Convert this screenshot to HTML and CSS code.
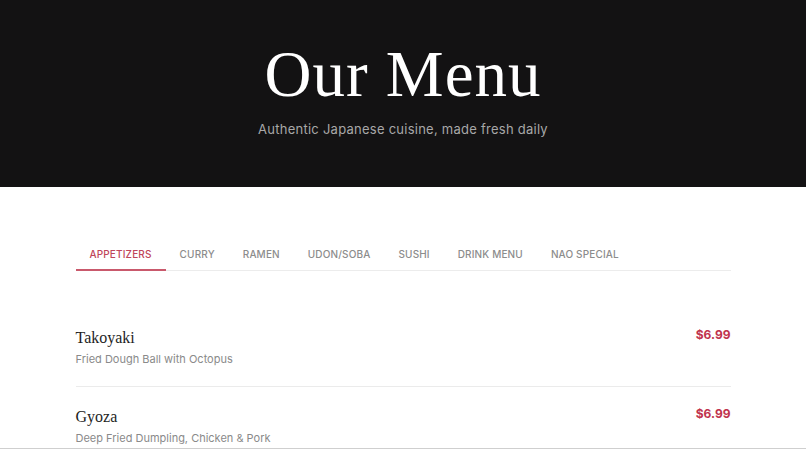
FILE: index.html
```html
<!DOCTYPE html>
<html lang="en">
<head>
<meta charset="utf-8">
<title>Our Menu</title>
<link rel="stylesheet" href="styles.css">
</head>
<body>
<header class="hero">
  <h1 class="hero-title">Our Menu</h1>
  <p class="hero-sub">Authentic Japanese cuisine, made fresh daily</p>
</header>
<main class="menu">
  <nav class="tabs">
    <a class="tab active">Appetizers</a>
    <a class="tab">Curry</a>
    <a class="tab">Ramen</a>
    <a class="tab">Udon/Soba</a>
    <a class="tab">Sushi</a>
    <a class="tab">Drink Menu</a>
    <a class="tab">Nao Special</a>
  </nav>
  <ul class="items">
    <li class="item">
      <div class="item-info">
        <h3 class="item-name">Takoyaki</h3>
        <p class="item-desc">Fried Dough Ball with Octopus</p>
      </div>
      <span class="item-price">$6.99</span>
    </li>
    <li class="item">
      <div class="item-info">
        <h3 class="item-name">Gyoza</h3>
        <p class="item-desc">Deep Fried Dumpling, Chicken &amp; Pork</p>
      </div>
      <span class="item-price">$6.99</span>
    </li>
  </ul>
</main>
<div class="bottom-edge"></div>
</body>
</html>
```

FILE: styles.css
```css
* { box-sizing: border-box; }
html, body { margin: 0; padding: 0; }
body {
  background: #ffffff;
  font-family: "Inter", "DejaVu Sans", sans-serif;
  color: #222;
  overflow: hidden;
  height: 449px;
}
.hero {
  background: #131213;
  height: 187px;
  display: flex;
  flex-direction: column;
  align-items: center;
  padding-top: 38px;
}
.hero-title {
  margin: 0;
  font-family: "Liberation Serif", "Times New Roman", serif;
  font-weight: 400;
  font-size: 65px;
  line-height: 72px;
  color: #ffffff;
  letter-spacing: 1px;
}
.hero-sub {
  margin: 11px 0 0;
  font-size: 13px;
  color: #a8a8a8;
  letter-spacing: 0.25px;
}
.menu {
  width: 655px;
  margin: 0 auto;
  padding-top: 59px;
}
.tabs {
  display: flex;
  border-bottom: 1px solid #ececec;
}
.tab {
  padding: 0 14px 0;
  height: 25px;
  line-height: 16px;
  font-size: 10px;
  font-weight: 500;
  letter-spacing: 0.15px;
  text-transform: uppercase;
  color: #8c8c8c;
  border-bottom: 2px solid transparent;
  margin-bottom: -1px;
}
.tab.active {
  color: #c0455a;
  border-bottom-color: #c9596c;
}
.items {
  list-style: none;
  margin: 0;
  padding: 0;
  margin-top: 56px;
}
.item {
  display: flex;
  justify-content: space-between;
  align-items: flex-start;
  padding: 0 0 19px;
  border-bottom: 1px solid #ebebeb;
  margin-bottom: 19px;
}
.item-name {
  margin: 0;
  font-family: "Liberation Serif", "Times New Roman", serif;
  font-weight: 400;
  font-size: 16px;
  line-height: 22px;
  color: #1e1e1e;
}
.item-desc {
  margin: 2px 0 0;
  font-size: 11px;
  line-height: 16px;
  color: #8a8a8a;
}
.item-price {
  font-size: 12px;
  font-weight: 700;
  color: #c0334d;
  line-height: 16px;
}
.bottom-edge {
  position: fixed;
  left: 0;
  right: 0;
  bottom: 0;
  height: 1px;
  background: #cfcfcf;
}
```
